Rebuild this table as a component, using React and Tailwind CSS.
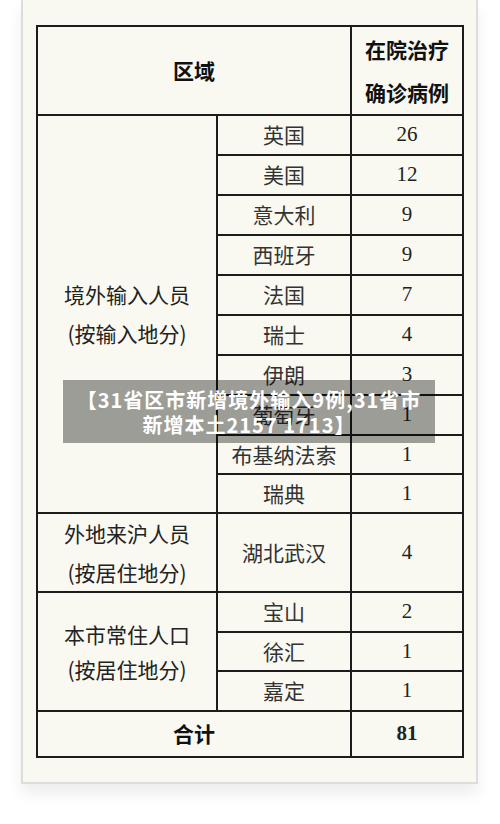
import React from "react";

const sans = "font-['Noto_Sans_CJK_SC','Noto_Sans',sans-serif]";
const serif = "font-['Liberation_Serif','Times_New_Roman',serif]";

const abroad = [
  ["英国", "26"],
  ["美国", "12"],
  ["意大利", "9"],
  ["西班牙", "9"],
  ["法国", "7"],
  ["瑞士", "4"],
  ["伊朗", "3"],
  ["葡萄牙", "1"],
  ["布基纳法索", "1"],
  ["瑞典", "1"],
];

const local = [
  ["宝山", "2"],
  ["徐汇", "1"],
  ["嘉定", "1"],
];

function Cell({ className = "", children }) {
  return (
    <div className={`bg-[#f9f9f1] flex items-center justify-center text-center ${className}`}>
      {children}
    </div>
  );
}

export default function App() {
  return (
    <div className="relative w-[500px] h-[824px] bg-white overflow-hidden">
      <div className="ml-[21px] w-[457px] bg-[#f9f9f1] border-x-2 border-b-2 border-[#dddddd] pl-[13px] pt-[25px] pb-[24px] shadow-[0_10px_14px_rgba(0,0,0,0.07)]">
        <div className="w-[428px] grid grid-cols-[178px_132px_110px] grid-rows-[87px_repeat(8,38px)_37px_37px_77px_38px_37px_38px_44px] gap-[2px] p-[2px] bg-[#1c1c1c]">
          <Cell className={`col-span-2 ${sans} font-bold text-[21px] text-[#111]`}>区域</Cell>
          <Cell className={`${sans} font-bold text-[21px] leading-[43px] text-[#111]`}>
            <div>
              在院治疗
              <br />
              确诊病例
            </div>
          </Cell>

          <Cell className={`row-span-10 col-start-1 row-start-2 ${sans} text-[21px] leading-[39px] text-[#222]`}>
            <div>
              境外输入人员
              <br />
              (按输入地分)
            </div>
          </Cell>
          {abroad.map(([name, n]) => (
            <React.Fragment key={name}>
              <Cell className={`col-start-2 ${sans} text-[21px] text-[#333]`}>{name}</Cell>
              <Cell className={`col-start-3 ${serif} text-[21px] text-[#222]`}>{n}</Cell>
            </React.Fragment>
          ))}

          <Cell className={`col-start-1 ${sans} text-[21px] leading-[39px] text-[#222]`}>
            <div>
              外地来沪人员
              <br />
              (按居住地分)
            </div>
          </Cell>
          <Cell className={`${sans} text-[21px] text-[#333]`}>湖北武汉</Cell>
          <Cell className={`${serif} text-[21px] text-[#222]`}>4</Cell>

          <Cell className={`row-span-3 col-start-1 row-start-13 ${sans} text-[21px] leading-[35px] text-[#222]`}>
            <div>
              本市常住人口
              <br />
              (按居住地分)
            </div>
          </Cell>
          {local.map(([name, n]) => (
            <React.Fragment key={name}>
              <Cell className={`col-start-2 ${sans} text-[21px] text-[#333]`}>{name}</Cell>
              <Cell className={`col-start-3 ${serif} text-[21px] text-[#222]`}>{n}</Cell>
            </React.Fragment>
          ))}

          <Cell className={`col-span-2 ${sans} font-bold text-[21px] text-[#111]`}>合计</Cell>
          <Cell className={`${serif} font-bold text-[21px] text-[#222]`}>81</Cell>
        </div>
      </div>

      <div className={`absolute left-[63px] top-[380px] w-[372px] h-[63px] bg-[rgba(0,0,0,0.37)] flex items-center justify-center text-center text-white font-bold text-[20px] leading-[25px] tracking-[1px] ${sans}`}>
        <div>
          【31省区市新增境外输入9例,31省市
          <br />
          新增本土2157 1713】
        </div>
      </div>
    </div>
  );
}
